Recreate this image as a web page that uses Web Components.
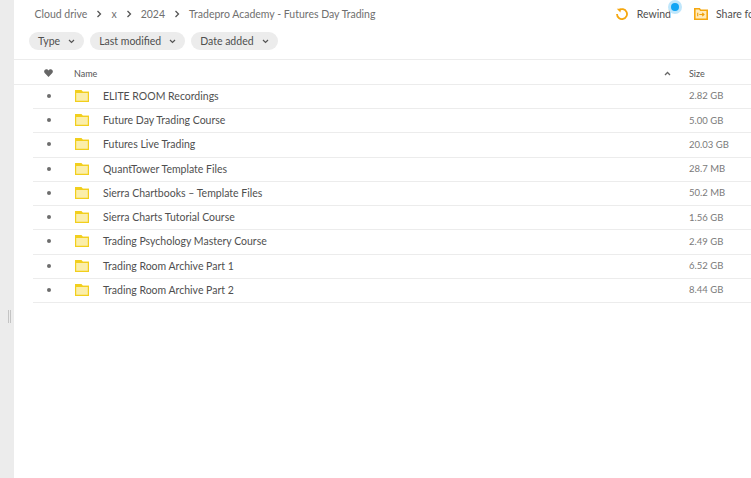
<!DOCTYPE html>
<html>
<head>
<meta charset="utf-8">
<title>Cloud drive</title>
<style>
  html, body { margin: 0; height: 100%; overflow: hidden; background: #fff; }
  body { font-family: Lato, "Liberation Sans", sans-serif; color: #4f4f4f; }
</style>
</head>
<body>
<drive-app>
  <crumb-bar slot="top"></crumb-bar>
  <filter-chip slot="filters">Type</filter-chip>
  <filter-chip slot="filters">Last modified</filter-chip>
  <filter-chip slot="filters">Date added</filter-chip>
  <table-head slot="list"></table-head>
  <folder-row slot="list" name="ELITE ROOM Recordings" size="2.82 GB"></folder-row>
  <folder-row slot="list" name="Future Day Trading Course" size="5.00 GB"></folder-row>
  <folder-row slot="list" name="Futures Live Trading" size="20.03 GB"></folder-row>
  <folder-row slot="list" name="QuantTower Template Files" size="28.7 MB"></folder-row>
  <folder-row slot="list" name="Sierra Chartbooks – Template Files" size="50.2 MB"></folder-row>
  <folder-row slot="list" name="Sierra Charts Tutorial Course" size="1.56 GB"></folder-row>
  <folder-row slot="list" name="Trading Psychology Mastery Course" size="2.49 GB"></folder-row>
  <folder-row slot="list" name="Trading Room Archive Part 1" size="6.52 GB"></folder-row>
  <folder-row slot="list" name="Trading Room Archive Part 2" size="8.44 GB"></folder-row>
</drive-app>
<script>
// page frame: grey strip on the left, header + list on the right
class DriveApp extends HTMLElement {
  constructor() {
    super();
    this.attachShadow({ mode: "open" });
    this.shadowRoot.innerHTML = `
      <style>
        :host { display: flex; height: 100vh; overflow: hidden; }
        .strip { width: 14px; flex: none; background: #ececec; display: flex; align-items: center; justify-content: center; }
        .grip { width: 3px; height: 13px; border: solid #c4c4c4; border-width: 0 1px; box-sizing: border-box; margin: 0 0 0 4px; transform: translateY(77px); }
        main { flex: 1; min-width: 0; }
        .filters { display: flex; gap: 6px; padding: 4px 0 0 15px; height: 27px; border-bottom: 1px solid #ececec; }
      </style>
      <div class="strip"><div class="grip"></div></div>
      <main>
        <slot name="top"></slot>
        <div class="filters"><slot name="filters"></slot></div>
        <slot name="list"></slot>
      </main>`;
  }
}

class CrumbBar extends HTMLElement {
  constructor() {
    super();
    this.attachShadow({ mode: "open" });
    const chev = `<svg width="6" height="8" viewBox="0 0 6 8"><path d="M1.500 1l3 3-3 3" fill="none" stroke="#555" stroke-width="1.300"/></svg>`;
    this.shadowRoot.innerHTML = `
      <style>
        :host { display: flex; align-items: center; height: 28px; font-size: 10.500px; color: #6f6f6f; white-space: nowrap; }
        .path { display: flex; align-items: center; padding-left: 20.500px; flex: 1; }
        svg { flex: none; }
        .path svg { margin: 0 9px; }
        .act { display: flex; align-items: center; color: #4f4f4f; position: relative; flex: none; }
        .rewind { gap: 9px; }
        .share { gap: 8px; margin-left: 23px; width: 57px; }
        .dot { position: absolute; left: 55px; top: -5px; width: 8px; height: 8px; border-radius: 50%; background: #12a5f4; box-shadow: 0 0 0 3px #bfe6fb; }
      </style>
      <div class="path"><span>Cloud drive</span>${chev}<span>x</span>${chev}<span>2024</span>${chev}<span>Tradepro Academy - Futures Day Trading</span></div>
      <div class="act rewind">
        <svg width="12" height="12" viewBox="0 0 12 12"><path d="M2.800 2.200A5 5 0 1 1 1 6" fill="none" stroke="#f5a70f" stroke-width="1.800"/><path d="M.8 .8h4.200l-.6 3.800z" fill="#f5a70f"/></svg>
        <span>Rewind</span><i class="dot"></i>
      </div>
      <div class="act share">
        <svg width="14" height="12" viewBox="0 0 14 12"><path d="M.8.800h4.600l1.200 1.400h6.600v9H.8z" fill="#ffebbd" stroke="#f5a70f" stroke-width="1.600"/><path d="M3.700 4.700v3.600M5.300 6.500h4.600M8.200 4.800l1.800 1.700-1.800 1.700" fill="none" stroke="#f0a00a" stroke-width="1.100"/></svg>
        <span>Share folder</span>
      </div>`;
  }
}

class FilterChip extends HTMLElement {
  constructor() {
    super();
    this.attachShadow({ mode: "open" });
    this.shadowRoot.innerHTML = `
      <style>
        :host { display: inline-flex; align-items: center; gap: 8px; height: 18px; padding: 0 9px; border-radius: 9px; background: #ececec; font-size: 10.500px; color: #4f4f4f; }
      </style>
      <slot></slot>
      <svg width="7" height="5" viewBox="0 0 7 5"><path d="M1 1l2.500 2.500L6 1" fill="none" stroke="#555" stroke-width="1.200"/></svg>`;
  }
}

class TableHead extends HTMLElement {
  constructor() {
    super();
    this.attachShadow({ mode: "open" });
    this.shadowRoot.innerHTML = `
      <style>
        :host { display: grid; grid-template-columns: 60px 600px 1fr; align-items: center; height: 24.750px; box-sizing: border-box; padding-top: 3px; border-bottom: 1px solid #ececec; font-size: 9px; color: #555; }
        .fav { padding-left: 30px; display: flex; }
        .name { display: flex; justify-content: space-between; align-items: center; padding-right: 3px; }
        .size { padding-left: 15px; }
      </style>
      <div class="fav"><svg width="9" height="8" viewBox="0 0 9 8"><path d="M4.500 8L.7 4.100C-.5 2.800.3.300 2.300.300c1 0 1.700.5 2.200 1.200C5 .8 5.700.3 6.700.3c2 0 2.800 2.500 1.600 3.800z" fill="#666"/></svg></div>
      <div class="name"><span>Name</span><svg width="7" height="5" viewBox="0 0 7 5"><path d="M1 4l2.500-2.500L6 4" fill="none" stroke="#666" stroke-width="1.300"/></svg></div>
      <div class="size">Size</div>`;
  }
}

class FolderRow extends HTMLElement {
  constructor() {
    super();
    this.attachShadow({ mode: "open" });
    this.shadowRoot.innerHTML = `
      <style>
        :host { display: block; height: 24.250px; padding-left: 19px; }
        .row { display: grid; grid-template-columns: 41px 29px 571px 1fr; align-items: center; height: 100%; box-sizing: border-box; padding-bottom: 1px; border-bottom: 1px solid #ececec; font-size: 10.500px; color: #4f4f4f; }
        .bullet { width: 4px; height: 4px; border-radius: 50%; background: #6d6d6d; margin-left: 14px; }
        svg { display: block; margin-left: 1px; }
        .size { font-size: 9.500px; color: #7a7a7a; padding-left: 15px; white-space: nowrap; }
      </style>
      <div class="row">
        <div class="bullet"></div>
        <svg width="14" height="12" viewBox="0 0 14 12"><path d="M.6 2.400h12.800v9H.6z" fill="#fbeeaa" stroke="#f2cf1d" stroke-width="1.200"/><path d="M0 0h6.500l1.400 1.800H14v1.200H0z" fill="#f2cf1d"/></svg>
        <div class="name"></div>
        <div class="size"></div>
      </div>`;
  }
  connectedCallback() {
    this.shadowRoot.querySelector(".name").textContent = this.getAttribute("name");
    this.shadowRoot.querySelector(".size").textContent = this.getAttribute("size");
  }
}

customElements.define("drive-app", DriveApp);
customElements.define("crumb-bar", CrumbBar);
customElements.define("filter-chip", FilterChip);
customElements.define("table-head", TableHead);
customElements.define("folder-row", FolderRow);
</script>
</body>
</html>
